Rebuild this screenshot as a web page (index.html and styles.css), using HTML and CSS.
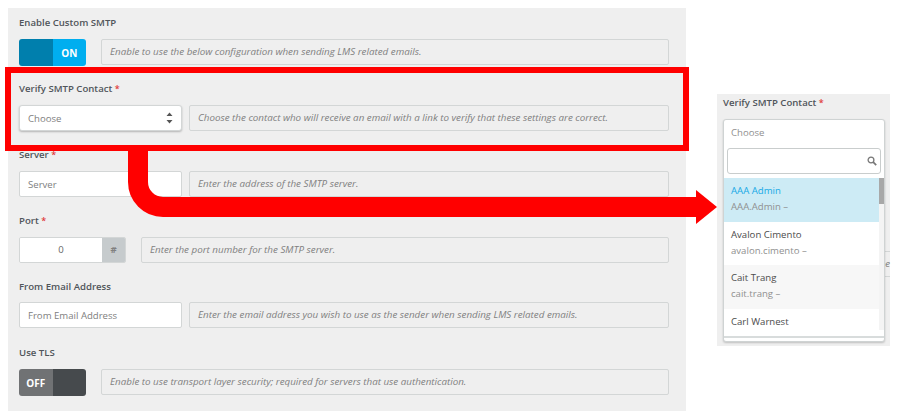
FILE: index.html
```html
<!DOCTYPE html>
<html lang="en">
<head>
    <meta charset="UTF-8">
    <title>SMTP Settings</title>
    <link rel="stylesheet" href="styles.css">
</head>
<body>
    <div class="page">
        <form class="panel">
            <div class="row">
                <label class="label">Enable Custom SMTP</label>
                <div class="controls">
                    <div class="toggle toggle-on"><span class="knob"></span><span class="state">ON</span></div>
                    <div class="hint">Enable to use the below configuration when sending LMS related emails.</div>
                </div>
            </div>
            <div class="row">
                <label class="label">Verify SMTP Contact <span class="req">*</span></label>
                <div class="controls">
                    <div class="field select">
                        <span>Choose</span>
                        <svg class="updown" width="7" height="12" viewBox="0 0 7 12"><path d="M3.5 0.5 L6.5 4 H0.5 Z M0.5 8 H6.5 L3.5 11.5 Z" fill="#555"/></svg>
                    </div>
                    <div class="hint">Choose the contact who will receive an email with a link to verify that these settings are correct.</div>
                </div>
            </div>
            <div class="row">
                <label class="label">Server <span class="req">*</span></label>
                <div class="controls">
                    <div class="field">Server</div>
                    <div class="hint">Enter the address of the SMTP server.</div>
                </div>
            </div>
            <div class="row row-port">
                <label class="label">Port <span class="req">*</span></label>
                <div class="controls">
                    <div class="number">
                        <div class="number-value">0</div>
                        <div class="number-unit">#</div>
                    </div>
                    <div class="hint">Enter the port number for the SMTP server.</div>
                </div>
            </div>
            <div class="row row-from">
                <label class="label">From Email Address</label>
                <div class="controls">
                    <div class="field">From Email Address</div>
                    <div class="hint">Enter the email address you wish to use as the sender when sending LMS related emails.</div>
                </div>
            </div>
            <div class="row">
                <label class="label">Use TLS</label>
                <div class="controls">
                    <div class="toggle toggle-off"><span class="state">OFF</span><span class="knob"></span></div>
                    <div class="hint">Enable to use transport layer security; required for servers that use authentication.</div>
                </div>
            </div>
        </form>

        <div class="side">
            <label class="label">Verify SMTP Contact <span class="req">*</span></label>
            <div class="dropdown">
                <div class="dropdown-head">Choose</div>
                <div class="search">
                    <svg width="10" height="10" viewBox="0 0 10 10"><circle cx="4" cy="4" r="2.9" fill="none" stroke="#777" stroke-width="1.3"/><path d="M6.2 6.2 L9.2 9.2" stroke="#777" stroke-width="1.7"/></svg>
                </div>
                <div class="results">
                    <ul class="options">
                        <li class="active"><b>AAA Admin</b><i>AAA.Admin –</i></li>
                        <li><b>Avalon Cimento</b><i>avalon.cimento –</i></li>
                        <li class="shaded"><b>Cait Trang</b><i>cait.trang –</i></li>
                        <li><b>Carl Warnest</b></li>
                    </ul>
                    <div class="scrollbar"><div class="thumb"></div></div>
                </div>
                <div class="dropdown-foot"></div>
            </div>
            <div class="behind">pe</div>
        </div>
    </div>

    <div class="callout"></div>
    <svg class="arrow" width="897" height="418" viewBox="0 0 897 418">
        <path d="M138 148 V182 A25 25 0 0 0 163 207 H698" fill="none" stroke="#f00" stroke-width="20"/>
        <path d="M696 190 L717 207 L696 224 Z" fill="#f00"/>
    </svg>
</body>
</html>
```

FILE: styles.css
```css
* {
    box-sizing: border-box;
}
body {
    margin: 0;
    background: white;
    font-family: "Open Sans", "Noto Sans", sans-serif;
    font-size: 9.6px;
    color: #666;
}
.page {
    display: flex;
    align-items: flex-start;
    padding-top: 8px;
    padding-left: 8px;
}
.panel {
    width: 678px;
    height: 403px;
    background: #efefef;
    padding: 6px 17px 0 11px;
}
.row {
    height: 66px;
}
.row-port {
    height: 65px;
}
.row-from .label {
    margin-top: 1px;
}
.row-from .controls {
    margin-top: 8px;
}
.label {
    display: block;
    height: 16px;
    line-height: 18px;
    font-weight: 600;
    font-size: 9.6px;
    color: #50555a;
}
.req {
    color: #e03a3a;
    font-size: 9px;
}
.controls {
    display: flex;
    gap: 7px;
    margin-top: 9px;
    height: 27px;
}
.toggle {
    display: flex;
    width: 67px;
    height: 27px;
    margin-right: 8px;
    border-radius: 3px;
    overflow: hidden;
    font-weight: 700;
    font-size: 10px;
    color: white;
}
.toggle .knob,
.toggle .state {
    width: 50%;
    display: flex;
    align-items: center;
    justify-content: center;
}
.toggle-on .knob {
    background: #007fad;
}
.toggle-on .state {
    background: #00aeef;
}
.toggle-off .knob {
    background: #464a4d;
}
.toggle-off .state {
    background: #707274;
}
.hint {
    flex: 1;
    height: 26px;
    line-height: 24px;
    padding-left: 8px;
    border: 1px solid #d3d6d6;
    border-radius: 2px;
    font-style: italic;
    font-size: 9.8px;
    color: #808080;
}
.field {
    display: flex;
    align-items: center;
    justify-content: space-between;
    width: 163px;
    height: 26px;
    padding: 0 8px;
    background: white;
    border: 1px solid #d3d6d6;
    border-radius: 2px;
    color: #808080;
}
.select {
    box-shadow: 0 1px 2px rgba(0, 0, 0, 0.25);
    border-radius: 3px;
}
.number {
    display: flex;
    width: 107px;
    height: 26px;
    margin-right: 8px;
    border: 1px solid #d3d6d6;
    border-radius: 2px;
    overflow: hidden;
}
.number-value {
    flex: 1;
    background: white;
    text-align: center;
    line-height: 24px;
}
.number-unit {
    width: 23px;
    background: #c6cbcd;
    text-align: center;
    line-height: 24px;
    font-weight: 700;
    color: #808080;
}
.side {
    position: relative;
    width: 173px;
    height: 252px;
    margin-top: 86px;
    margin-left: 31px;
    padding: 1px 5px 0 6px;
    background: #efefef;
}
.side .label {
    line-height: 16px;
}
.dropdown {
    position: relative;
    z-index: 1;
    height: 223px;
    margin-top: 8px;
    background: white;
    border: 1px solid #cfd3d3;
    border-radius: 3px;
    box-shadow: 0 1px 2px rgba(0, 0, 0, 0.2);
}
.dropdown-head {
    height: 27px;
    line-height: 25px;
    padding-left: 7px;
    color: #909090;
}
.search {
    display: flex;
    align-items: center;
    justify-content: flex-end;
    height: 26px;
    margin: 1px 3px 4px 3px;
    padding-right: 3px;
    border: 1px solid #c9cdcd;
    border-radius: 3px;
}
.results {
    display: flex;
    height: 152px;
}
.options {
    flex: 1;
    margin: 0;
    padding: 0;
    list-style: none;
}
.options li {
    height: 43.5px;
    padding: 5px 7px 0;
}
.options b,
.options i {
    display: block;
    height: 16px;
    line-height: 16px;
    font-style: normal;
    font-weight: 400;
}
.options b {
    color: #4c4c4c;
}
.options i {
    color: #909090;
}
.options .active {
    background: #cdebf5;
}
.options .active b {
    color: #16a9e6;
}
.options .shaded {
    background: #f7f7f7;
}
.scrollbar {
    width: 5px;
    background: #f4f4f4;
}
.thumb {
    height: 26px;
    background: #a8a8a8;
}
.dropdown-foot {
    height: 8px;
    border-bottom: 2px solid #d8dcdc;
}
.behind {
    position: absolute;
    right: 0;
    top: 157px;
    width: 12px;
    height: 26px;
    line-height: 24px;
    text-align: right;
    border: 1px solid #d3d6d6;
    border-width: 1px 0;
    font-style: italic;
    color: #808080;
}
.callout {
    position: absolute;
    left: 5px;
    top: 67px;
    width: 684px;
    height: 84px;
    border: 6px solid #f00;
}
.arrow {
    position: absolute;
    left: 0;
    top: 0;
    pointer-events: none;
}
```
